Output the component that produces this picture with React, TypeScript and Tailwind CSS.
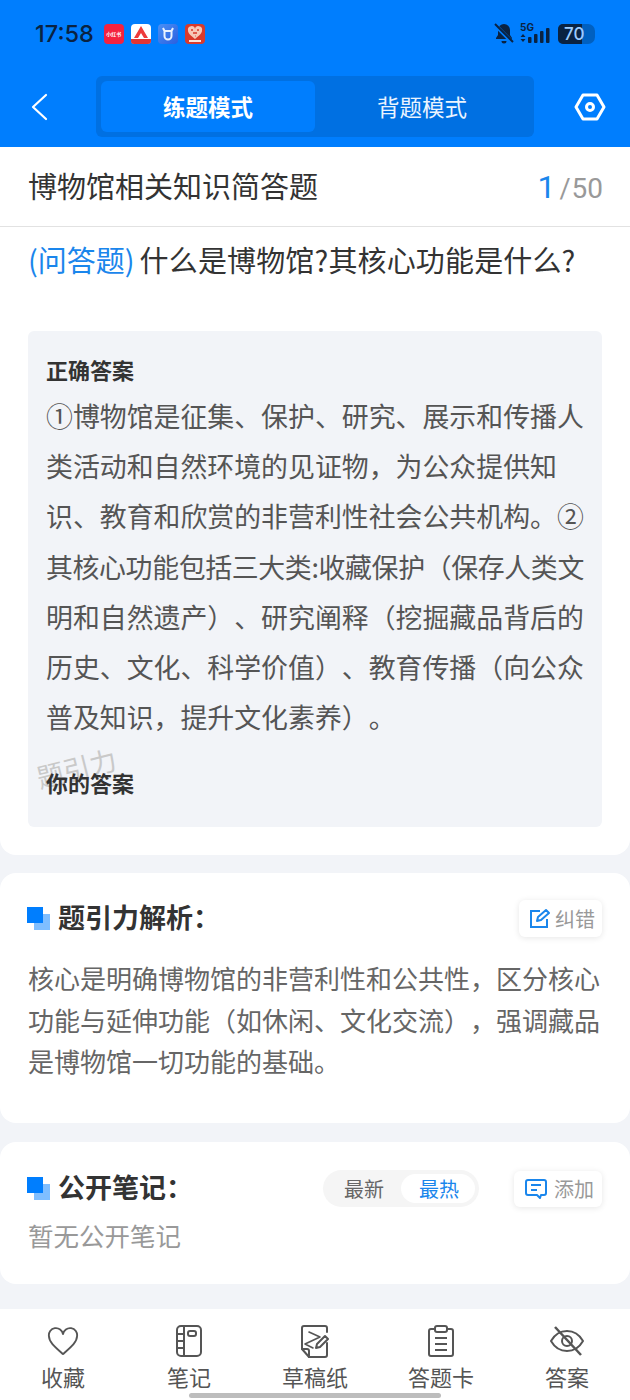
import React from "react";

const cjk = { fontFamily: '"Noto Sans CJK SC", "Noto Sans", sans-serif' };

function Heading({ children }: { children: React.ReactNode }) {
  return (
    <div className="flex items-center gap-[7px]">
      <svg width="23" height="24" viewBox="0 0 23 24" className="shrink-0 -translate-x-[1px]">
        <rect x="7" y="7" width="16" height="16" fill="#7fbeff" />
        <rect x="0" y="0" width="16" height="16" fill="#007efe" />
      </svg>
      <span className="-mt-[3px] text-[27px] font-bold leading-[36px] text-[#333]">{children}</span>
    </div>
  );
}

function TabItem({ label, icon }: { label: string; icon: React.ReactNode }) {
  return (
    <div className="flex flex-col items-center">
      <div className="flex h-[36px] w-[40px] items-center justify-center">{icon}</div>
      <div className="mt-[2px] text-[22px] leading-[30px] text-[#555]">{label}</div>
    </div>
  );
}

export default function App() {
  return (
    <div style={cjk} className="relative flex h-[1400px] w-[630px] flex-col overflow-hidden bg-[#f2f4f8] [text-spacing-trim:space-all]">
      <header className="h-[147px] shrink-0 bg-[#007efe]">
        <div className="flex h-[68px] items-center justify-between pl-[35px] pr-[35px]">
          <div className="flex items-center gap-[7px]">
            <span className="mr-[3px] font-['Inter'] text-[23.500px] font-medium leading-none text-[#0a2342]">17:58</span>
            <div className="flex h-[20px] w-[20px] items-center justify-center rounded-[4px] bg-[#f5223f] text-[5px] font-bold text-white">小红书</div>
            <svg width="20" height="20" viewBox="0 0 20 20">
              <rect width="20" height="20" rx="4" fill="#fff" />
              <path d="M3 14 10 2l7 12h-4l-3-5-3 5z" fill="#ee3b3b" />
              <path d="M0 15h20v2a3 3 0 0 1-3 3H3a3 3 0 0 1-3-3z" fill="#e23535" />
            </svg>
            <svg width="20" height="20" viewBox="0 0 20 20">
              <defs>
                <linearGradient id="bl" x1="0" y1="0" x2="1" y2="1">
                  <stop offset="0" stopColor="#4a90f5" />
                  <stop offset="1" stopColor="#2a5fe0" />
                </linearGradient>
              </defs>
              <rect width="20" height="20" rx="4" fill="url(#bl)" />
              <path d="M6.500 7v5a3.500 3.500 0 0 0 7 0V7M5 4l1.500 3h7L15 4" stroke="#e8f2ff" strokeWidth="2" fill="none" />
            </svg>
            <svg width="20" height="20" viewBox="0 0 20 20">
              <rect width="20" height="20" rx="4" fill="#d93a2b" />
              <path d="M10 15C5 11 3 9 3 6.500A3.500 3.500 0 0 1 10 5a3.500 3.500 0 0 1 7 1.500C17 9 15 11 10 15z" fill="#f6c9b8" />
              <path d="M6 6h2M12 6h2M8 9h4M10 12h.5" stroke="#d93a2b" strokeWidth="1.500" />
              <rect x="4" y="16" width="12" height="2" fill="#fbe3d8" />
            </svg>
          </div>
          <div className="flex items-center gap-[6px]">
            <svg width="20" height="22" viewBox="0 0 20 22" fill="#0a2342">
              <path d="M10 1a6 6 0 0 0-6 6v5l-2 3v1h16v-1l-2-3V7a6 6 0 0 0-6-6zM7.500 18a2.500 2.500 0 0 0 5 0z" />
              <path d="M1 2l18 18" stroke="#007efe" strokeWidth="4" />
              <path d="M1 1l18 18" stroke="#0a2342" strokeWidth="2" />
            </svg>
            <div className="relative h-[22px] w-[32px]">
              <span className="absolute left-0 top-[-2px] font-['Inter'] text-[10px] font-bold leading-[12px] text-[#0a2342]">5G</span>
              <svg width="32" height="22" viewBox="0 0 32 22" fill="#0a2342">
                <path d="M0.500 14l2.500-3 2.500 3zM0.500 16l2.500 3 2.500-3z" />
                <rect x="8" y="14" width="3.500" height="6" rx="1" />
                <rect x="14" y="11" width="3.500" height="9" rx="1" />
                <rect x="20" y="8" width="3.500" height="12" rx="1" />
                <rect x="26" y="5" width="3.500" height="15" rx="1" />
              </svg>
            </div>
            <div className="flex h-[20px] w-[37px] overflow-hidden rounded-l-[5px] rounded-r-[7px] bg-[#0060c0]">
              <div className="flex h-full w-[24px] items-center justify-start bg-[#0a2342] pl-[6px] font-['Inter'] text-[17px] font-medium leading-none text-[#9ccdff]">70</div>
            </div>
          </div>
        </div>
        <div className="mt-[8px] flex items-center">
          <div className="flex w-[96px] justify-start pl-[30px]">
            <svg width="18" height="28" viewBox="0 0 18 28" fill="none" stroke="#fff" strokeWidth="2.200" strokeLinecap="round" strokeLinejoin="round">
              <path d="M16 2 3 14l13 12" />
            </svg>
          </div>
          <div className="flex h-[61px] w-[438px] rounded-[6px] bg-[#0070e2] p-[5px]">
            <div className="flex h-[51px] w-[214px] items-center justify-center rounded-[6px] bg-[#007efe] text-[22.500px] font-bold text-white">练题模式</div>
            <div className="flex h-[51px] flex-1 items-center justify-center text-[22.500px] text-[#eaf4ff]">背题模式</div>
          </div>
          <div className="flex flex-1 justify-end pr-[24px]">
            <svg width="32" height="28" viewBox="0 0 32 28" fill="none" stroke="#fff" strokeWidth="3">
              <path d="M9 2h14l7 12-7 12H9L2 14z" strokeLinejoin="round" />
              <circle cx="16" cy="14" r="3.500" />
            </svg>
          </div>
        </div>
      </header>

      <main className="flex min-h-0 flex-1 flex-col">
        <section className="h-[708px] shrink-0 rounded-b-[16px] bg-white">
          <div className="flex h-[80px] items-center justify-between border-b border-[#e2e2e2] pl-[28px] pr-[27px]">
            <h1 className="-mt-[3px] text-[29px] font-normal leading-[40px] text-[#333]">博物馆相关知识简答题</h1>
            <div className="flex items-baseline font-['Roboto']">
              <span className="text-[32px] text-[#1a86ec]">1</span>
              <span className="ml-[4px] text-[27px] text-[#999]">/</span>
              <span className="ml-[1px] text-[28px] text-[#999]">50</span>
            </div>
          </div>
          <div className="mt-[12px] flex whitespace-nowrap pl-[28px] text-[29px] leading-[40px] text-[#333]">
            <span className="text-[#1a86ec]">(问答题)</span>
            <span className="ml-[5px] tracking-[0.150px]">什么是博物馆?其核心功能是什么?</span>
          </div>
          <div className="relative mx-[28px] mt-[52px] h-[496px] rounded-[6px] bg-[#f2f4f8] px-[18px] pt-[23px]">
            <div className="text-[22px] font-bold leading-[30px] text-[#333]">正确答案</div>
            <p className="mt-[7px] w-[545px] whitespace-nowrap text-[26.900px] leading-[50.200px] text-[#555]">
              ①博物馆是征集、保护、研究、展示和传播人
              <br />
              类活动和自然环境的见证物，为公众提供知
              <br />
              识、教育和欣赏的非营利性社会公共机构。②
              <br />
              <span className="tracking-[-0.350px]">其核心功能包括三大类:收藏保护（保存人类文</span>
              <br />
              明和自然遗产）、研究阐释（挖掘藏品背后的
              <br />
              历史、文化、科学价值）、教育传播（向公众
              <br />
              普及知识，提升文化素养）。
            </p>
            <div className="absolute left-[8px] top-[419px] -rotate-[14deg] text-[27px] leading-[36px] text-[#c9c9c9]">题引力</div>
            <div className="relative mt-[25px] text-[22px] font-bold leading-[30px] text-[#333]">你的答案</div>
          </div>
        </section>

        <section className="mt-[18px] h-[250px] shrink-0 rounded-[16px] bg-white px-[28px] pt-[27px]">
          <div className="flex items-center justify-between">
            <Heading>题引力解析：</Heading>
            <div className="flex h-[37px] w-[83px] items-center justify-center gap-[5px] rounded-[6px] bg-white pl-[3px] text-[20px] text-[#999] shadow-[0_1px_6px_rgba(0,0,0,0.1)]">
              <svg width="21" height="21" viewBox="0 0 21 21" fill="none" stroke="#1a86ec" strokeWidth="2">
                <path d="M11 3H2v16h16v-8" />
                <path d="M8 13l1-4 8-7 3 3-8 7z" strokeLinejoin="round" />
              </svg>
              <span>纠错</span>
            </div>
          </div>
          <p className="mt-[20px] w-[574px] text-[26px] leading-[41.500px] text-[#666]">
            核心是明确博物馆的非营利性和公共性，区分核心功能与延伸功能（如休闲、文化交流），强调藏品是博物馆一切功能的基础。
          </p>
        </section>

        <section className="mt-[19px] h-[142px] shrink-0 rounded-[16px] bg-white px-[28px] pt-[28px]">
          <div className="flex items-center">
            <Heading>公开笔记：</Heading>
            <div className="ml-auto flex h-[37px] w-[156px] items-center rounded-full bg-[#f5f5f5] p-[4px] text-[20px]">
              <div className="flex h-full w-[74px] items-center justify-center text-[#666]">最新</div>
              <div className="flex h-full flex-1 items-center justify-center rounded-full bg-white pl-[2px] text-[#1a86ec]">最热</div>
            </div>
            <div className="ml-[35px] flex h-[36px] w-[88px] items-center justify-center gap-[7px] rounded-[6px] bg-white pl-[3px] text-[20px] text-[#999] shadow-[0_1px_6px_rgba(0,0,0,0.1)]">
              <svg width="22" height="21" viewBox="0 0 22 21" fill="none" stroke="#1a86ec" strokeWidth="2" strokeLinejoin="round">
                <path d="M3 2h16a2 2 0 0 1 2 2v11a2 2 0 0 1-2 2h-3l-1 3-3-3H3a2 2 0 0 1-2-2V4a2 2 0 0 1 2-2z" />
                <path d="M6 7h10M6 12h6" />
              </svg>
              <span>添加</span>
            </div>
          </div>
          <div className="mt-[10px] text-[25.500px] leading-[36px] text-[#999]">暂无公开笔记</div>
        </section>

        <nav className="mt-[25px] grid h-[91px] shrink-0 grid-cols-5 items-start bg-white pt-[14px]">
          <TabItem
            label="收藏"
            icon={
              <svg width="32" height="29" viewBox="0 0 34 31" fill="none" stroke="#555" strokeWidth="2">
                <path d="M17 29C8 21 2 16 2 10a7.500 7.500 0 0 1 15-2.500A7.500 7.500 0 0 1 32 10c0 6-6 11-15 19z" strokeLinejoin="round" />
              </svg>
            }
          />
          <TabItem
            label="笔记"
            icon={
              <svg width="26" height="32" viewBox="0 0 26 32" fill="none" stroke="#555" strokeWidth="2">
                <rect x="1" y="1" width="24" height="30" rx="4" />
                <path d="M8 1v30M1 9h7M1 16h7M1 23h7" />
                <rect x="12" y="6" width="8" height="5" rx="2" />
              </svg>
            }
          />
          <TabItem
            label="草稿纸"
            icon={
              <svg width="28" height="33" viewBox="0 0 28 33" fill="none" stroke="#555" strokeWidth="2" strokeLinejoin="round" strokeLinecap="round">
                <path d="M26 7V3a2 2 0 0 0-2-2H3a2 2 0 0 0-2 2v21l7 8h16a2 2 0 0 0 2-2V18" />
                <path d="M1 24h5a2 2 0 0 1 2 2v6" />
                <path d="M8 7l11 5-15 7 8 4" strokeWidth="1.600" />
                <path d="M15 23l1-4 8-8 3 3-8 8z" />
              </svg>
            }
          />
          <TabItem
            label="答题卡"
            icon={
              <svg width="28" height="32" viewBox="0 0 28 32" fill="none" stroke="#555" strokeWidth="2">
                <path d="M8 4H4a2 2 0 0 0-2 2v23a2 2 0 0 0 2 2h20a2 2 0 0 0 2-2V6a2 2 0 0 0-2-2h-4" />
                <rect x="8" y="1" width="12" height="6" rx="2" />
                <path d="M8 13h12M8 19h12M8 25h12" />
              </svg>
            }
          />
          <TabItem
            label="答案"
            icon={
              <svg width="36" height="32" viewBox="0 0 36 32" fill="none" stroke="#555" strokeWidth="2">
                <path d="M2 16c4-7 9-10 16-10s12 3 16 10c-4 7-9 10-16 10S6 23 2 16z" strokeLinejoin="round" />
                <circle cx="18" cy="16" r="5" />
                <path d="M6 2l26 28" strokeWidth="2.500" />
              </svg>
            }
          />
        </nav>
      </main>
      <div className="absolute bottom-[2px] left-[189px] h-[5px] w-[252px] rounded-full bg-[#bdbdbd]" />
    </div>
  );
}
